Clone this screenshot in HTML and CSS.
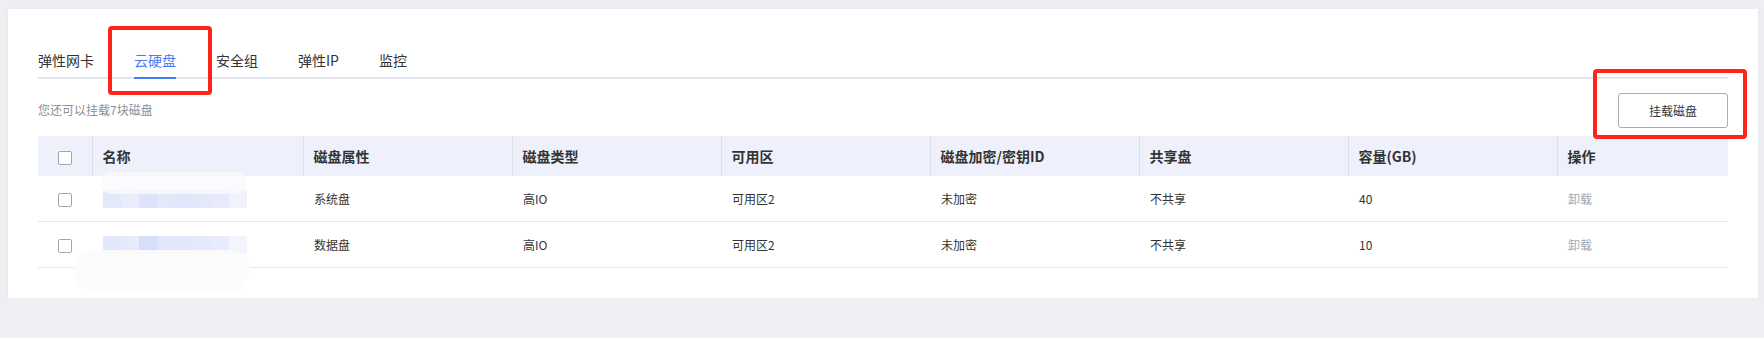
FILE: index.html
```html
<!DOCTYPE html>
<html lang="zh-CN">
<head>
    <meta charset="UTF-8">
    <meta name="viewport" content="width=device-width, initial-scale=1.0">
    <title>云硬盘</title>
    <link rel="stylesheet" href="styles.css">
</head>
<body>
<div class="card">
    <div class="tabs">
        <span class="tab">弹性网卡</span>
        <span class="tab active">云硬盘</span>
        <span class="tab">安全组</span>
        <span class="tab">弹性IP</span>
        <span class="tab">监控</span>
    </div>

    <div class="toolbar">
        <span class="note">您还可以挂载7块磁盘</span>
        <button class="btn">挂载磁盘</button>
    </div>

    <table class="disk-table">
        <colgroup>
            <col class="col-check">
            <col class="col-name">
            <col><col><col><col><col><col>
            <col class="col-op">
        </colgroup>
        <thead>
            <tr>
                <th class="check"><span class="checkbox"></span></th>
                <th>名称</th>
                <th>磁盘属性</th>
                <th>磁盘类型</th>
                <th>可用区</th>
                <th>磁盘加密/密钥ID</th>
                <th>共享盘</th>
                <th>容量(GB)</th>
                <th>操作</th>
            </tr>
        </thead>
        <tbody>
            <tr>
                <td class="check"><span class="checkbox"></span></td>
                <td><span class="masked"></span></td>
                <td>系统盘</td>
                <td>高IO</td>
                <td>可用区2</td>
                <td>未加密</td>
                <td>不共享</td>
                <td>40</td>
                <td class="op">卸载</td>
            </tr>
            <tr>
                <td class="check"><span class="checkbox"></span></td>
                <td><span class="masked second"></span></td>
                <td>数据盘</td>
                <td>高IO</td>
                <td>可用区2</td>
                <td>未加密</td>
                <td>不共享</td>
                <td>10</td>
                <td class="op">卸载</td>
            </tr>
        </tbody>
    </table>

    <!-- blur smudge over the name column -->
    <div class="smudge top"></div>
    <div class="smudge bottom"></div>

    <!-- annotation boxes -->
    <div class="mark mark-tab"></div>
    <div class="mark mark-btn"></div>
</div>
</body>
</html>
```

FILE: styles.css
```css
body {
    margin: 0;
    padding: 9px 6px 0 8px;
    background: #eeeff3;
    font-family: "Noto Sans CJK SC", "Noto Sans", sans-serif;
    color: #333;
}
.card {
    position: relative;
    background: #fff;
    padding: 41px 30px 30px 30px;
    box-shadow: 0 1px 4px rgba(0,0,0,0.04);
}
.tabs {
    display: flex;
    gap: 40px;
    border-bottom: 2px solid #e3e5ee;
}
.tab {
    font-size: 14px;
    line-height: 20px;
    padding-bottom: 7px;
    margin-bottom: -2px;
    border-bottom: 2px solid transparent;
    color: #333;
}
.tab.active {
    color: #3f7bf6;
    border-bottom-color: #3f7bf6;
}
.toolbar {
    display: flex;
    justify-content: space-between;
    align-items: center;
    margin-top: 14px;
    margin-bottom: 8px;
}
.note {
    font-size: 12px;
    color: #8b8f97;
    margin-top: -3px;
}
.btn {
    width: 110px;
    height: 35px;
    background: #fff;
    border: 1px solid #a9acb4;
    border-radius: 3px;
    font-family: inherit;
    font-size: 12px;
    color: #333;
}
.disk-table {
    width: 100%;
    table-layout: fixed;
    border-collapse: collapse;
}
.col-check { width: 54px; }
.col-name { width: 211px; }
.col-op { width: 171px; }
.disk-table th {
    height: 40px;
    padding: 0 0 0 10px;
    background: #eef1fb;
    border-left: 1px solid #dcdfe9;
    text-align: left;
    font-size: 14px;
    font-weight: 600;
    color: #333;
}
.disk-table th:first-child {
    border-left: none;
    border-top-left-radius: 3px;
}
.disk-table th:last-child {
    border-top-right-radius: 3px;
}
.disk-table td {
    height: 45px;
    padding: 0 0 0 11px;
    font-size: 12px;
    border-bottom: 1px solid #e4e6ed;
}
.disk-table .check {
    padding: 0;
    text-align: center;
}
.checkbox {
    display: inline-block;
    width: 12px;
    height: 12px;
    border: 1px solid #a3a6ae;
    border-radius: 2px;
    background: #fff;
    vertical-align: middle;
}
.disk-table td.op {
    color: #a5a8ae;
}
.masked {
    display: inline-block;
    width: 144px;
    height: 18px;
    vertical-align: middle;
    background: linear-gradient(90deg,
        #e3e8fb 0 18px, #e8ecfb 18px 36px, #dce3fb 36px 54px, #e3e8fa 54px 72px,
        #e0e6fb 72px 90px, #e3e8fb 90px 108px, #e6eafb 108px 126px, #f0f3fd 126px 144px);
}
.masked.second {
    background: linear-gradient(90deg,
        #e2e7fb 0 18px, #e6eafb 18px 36px, #d6def9 36px 54px, #e1e6fa 54px 72px,
        #e2e7fb 72px 90px, #e4e9fb 90px 108px, #e7ebfb 108px 126px, #f3f5fd 126px 144px);
}
.smudge {
    position: absolute;
    background: rgba(252,252,253,0.9);
    border-radius: 24px;
}
.smudge.top {
    left: 93px;
    top: 163px;
    width: 146px;
    height: 22px;
    background: rgba(250,250,252,0.8);
}
.smudge.bottom {
    left: 65px;
    top: 241px;
    width: 177px;
    height: 42px;
}
.mark {
    position: absolute;
    border: 4px solid #ff2419;
    border-radius: 4px;
    box-sizing: border-box;
}
.mark-tab {
    left: 100px;
    top: 17px;
    width: 104px;
    height: 69px;
}
.mark-btn {
    left: 1585px;
    top: 60px;
    width: 154px;
    height: 70px;
}
```
